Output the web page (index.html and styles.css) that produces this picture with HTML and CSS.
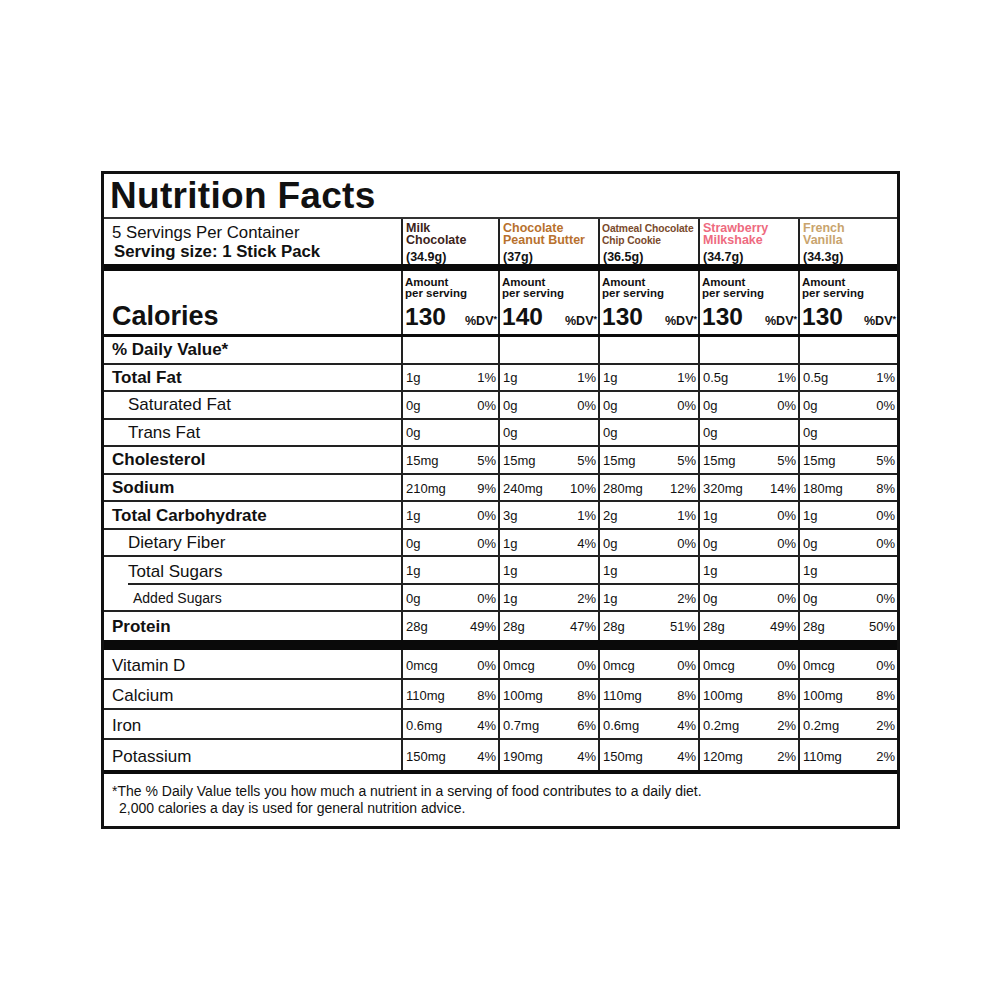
FILE: index.html
```html
<!DOCTYPE html>
<html lang="en">
<head>
<meta charset="utf-8">
<title>Nutrition Facts</title>
<link rel="stylesheet" href="styles.css">
</head>
<body>
<div class="label">
  <div class="title">Nutrition Facts</div>

  <div class="grid head">
    <div class="serv">
      <div>5 Servings Per Container</div>
      <div class="size">Serving size: 1 Stick Pack</div>
    </div>
    <div class="prod"><div class="pname c-milk">Milk<br>Chocolate</div><div class="wt">(34.9g)</div></div>
    <div class="prod"><div class="pname c-pb">Chocolate<br>Peanut Butter</div><div class="wt">(37g)</div></div>
    <div class="prod"><div class="pname small c-oat">Oatmeal Chocolate<br>Chip Cookie</div><div class="wt">(36.5g)</div></div>
    <div class="prod"><div class="pname c-straw">Strawberry<br>Milkshake</div><div class="wt">(34.7g)</div></div>
    <div class="prod"><div class="pname c-van">French<br>Vanilla</div><div class="wt">(34.3g)</div></div>
  </div>
  <div class="bar bar7"></div>

  <div class="grid cal">
    <div class="callab">Calories</div>
    <div class="calv"><div class="amt">Amount<br>per serving</div><div class="kc"><span class="num">130</span><span class="dv">%DV<span class="ast">*</span></span></div></div>
    <div class="calv"><div class="amt">Amount<br>per serving</div><div class="kc"><span class="num">140</span><span class="dv">%DV<span class="ast">*</span></span></div></div>
    <div class="calv"><div class="amt">Amount<br>per serving</div><div class="kc"><span class="num">130</span><span class="dv">%DV<span class="ast">*</span></span></div></div>
    <div class="calv"><div class="amt">Amount<br>per serving</div><div class="kc"><span class="num">130</span><span class="dv">%DV<span class="ast">*</span></span></div></div>
    <div class="calv"><div class="amt">Amount<br>per serving</div><div class="kc"><span class="num">130</span><span class="dv">%DV<span class="ast">*</span></span></div></div>
  </div>
  <div class="bar bar3"></div>

  <div class="grid row">
    <div class="lab b">% Daily Value*</div>
    <div class="v"></div><div class="v"></div><div class="v"></div><div class="v"></div><div class="v"></div>
  </div>
  <div class="grid row">
    <div class="lab b">Total Fat</div>
    <div class="v"><span>1g</span><span>1%</span></div>
    <div class="v"><span>1g</span><span>1%</span></div>
    <div class="v"><span>1g</span><span>1%</span></div>
    <div class="v"><span>0.5g</span><span>1%</span></div>
    <div class="v"><span>0.5g</span><span>1%</span></div>
  </div>
  <div class="grid row">
    <div class="lab ind">Saturated Fat</div>
    <div class="v"><span>0g</span><span>0%</span></div>
    <div class="v"><span>0g</span><span>0%</span></div>
    <div class="v"><span>0g</span><span>0%</span></div>
    <div class="v"><span>0g</span><span>0%</span></div>
    <div class="v"><span>0g</span><span>0%</span></div>
  </div>
  <div class="grid row">
    <div class="lab ind">Trans Fat</div>
    <div class="v"><span>0g</span></div>
    <div class="v"><span>0g</span></div>
    <div class="v"><span>0g</span></div>
    <div class="v"><span>0g</span></div>
    <div class="v"><span>0g</span></div>
  </div>
  <div class="grid row">
    <div class="lab b">Cholesterol</div>
    <div class="v"><span>15mg</span><span>5%</span></div>
    <div class="v"><span>15mg</span><span>5%</span></div>
    <div class="v"><span>15mg</span><span>5%</span></div>
    <div class="v"><span>15mg</span><span>5%</span></div>
    <div class="v"><span>15mg</span><span>5%</span></div>
  </div>
  <div class="grid row">
    <div class="lab b">Sodium</div>
    <div class="v"><span>210mg</span><span>9%</span></div>
    <div class="v"><span>240mg</span><span>10%</span></div>
    <div class="v"><span>280mg</span><span>12%</span></div>
    <div class="v"><span>320mg</span><span>14%</span></div>
    <div class="v"><span>180mg</span><span>8%</span></div>
  </div>
  <div class="grid row">
    <div class="lab b">Total Carbohydrate</div>
    <div class="v"><span>1g</span><span>0%</span></div>
    <div class="v"><span>3g</span><span>1%</span></div>
    <div class="v"><span>2g</span><span>1%</span></div>
    <div class="v"><span>1g</span><span>0%</span></div>
    <div class="v"><span>1g</span><span>0%</span></div>
  </div>
  <div class="grid row">
    <div class="lab ind">Dietary Fiber</div>
    <div class="v"><span>0g</span><span>0%</span></div>
    <div class="v"><span>1g</span><span>4%</span></div>
    <div class="v"><span>0g</span><span>0%</span></div>
    <div class="v"><span>0g</span><span>0%</span></div>
    <div class="v"><span>0g</span><span>0%</span></div>
  </div>
  <div class="grid row">
    <div class="lab ind sugline">Total Sugars</div>
    <div class="v"><span>1g</span></div>
    <div class="v"><span>1g</span></div>
    <div class="v"><span>1g</span></div>
    <div class="v"><span>1g</span></div>
    <div class="v"><span>1g</span></div>
  </div>
  <div class="grid row">
    <div class="lab ind2">Added Sugars</div>
    <div class="v"><span>0g</span><span>0%</span></div>
    <div class="v"><span>1g</span><span>2%</span></div>
    <div class="v"><span>1g</span><span>2%</span></div>
    <div class="v"><span>0g</span><span>0%</span></div>
    <div class="v"><span>0g</span><span>0%</span></div>
  </div>
  <div class="grid row last">
    <div class="lab b">Protein</div>
    <div class="v"><span>28g</span><span>49%</span></div>
    <div class="v"><span>28g</span><span>47%</span></div>
    <div class="v"><span>28g</span><span>51%</span></div>
    <div class="v"><span>28g</span><span>49%</span></div>
    <div class="v"><span>28g</span><span>50%</span></div>
  </div>
  <div class="bar bar10"></div>

  <div class="grid row vit">
    <div class="lab">Vitamin D</div>
    <div class="v"><span>0mcg</span><span>0%</span></div>
    <div class="v"><span>0mcg</span><span>0%</span></div>
    <div class="v"><span>0mcg</span><span>0%</span></div>
    <div class="v"><span>0mcg</span><span>0%</span></div>
    <div class="v"><span>0mcg</span><span>0%</span></div>
  </div>
  <div class="grid row vit">
    <div class="lab">Calcium</div>
    <div class="v"><span>110mg</span><span>8%</span></div>
    <div class="v"><span>100mg</span><span>8%</span></div>
    <div class="v"><span>110mg</span><span>8%</span></div>
    <div class="v"><span>100mg</span><span>8%</span></div>
    <div class="v"><span>100mg</span><span>8%</span></div>
  </div>
  <div class="grid row vit">
    <div class="lab">Iron</div>
    <div class="v"><span>0.6mg</span><span>4%</span></div>
    <div class="v"><span>0.7mg</span><span>6%</span></div>
    <div class="v"><span>0.6mg</span><span>4%</span></div>
    <div class="v"><span>0.2mg</span><span>2%</span></div>
    <div class="v"><span>0.2mg</span><span>2%</span></div>
  </div>
  <div class="grid row vit last">
    <div class="lab">Potassium</div>
    <div class="v"><span>150mg</span><span>4%</span></div>
    <div class="v"><span>190mg</span><span>4%</span></div>
    <div class="v"><span>150mg</span><span>4%</span></div>
    <div class="v"><span>120mg</span><span>2%</span></div>
    <div class="v"><span>110mg</span><span>2%</span></div>
  </div>
  <div class="bar bar4"></div>

  <div class="foot">
    <div>*The % Daily Value tells you how much a nutrient in a serving of food contributes to a daily diet.</div>
    <div class="foot2">2,000 calories a day is used for general nutrition advice.</div>
  </div>
</div>
</body>
</html>
```

FILE: styles.css
```css
* { box-sizing: border-box; }

html, body {
  margin: 0;
  padding: 0;
  background: #ffffff;
}

body {
  font-family: "Liberation Sans", Arial, Helvetica, sans-serif;
  color: #111;
}

.label {
  width: 799px;
  margin: 171px 0 0 101px;
  border: 3px solid #111;
  background: #fff;
}

.title {
  height: 45px;
  line-height: 43px;
  font-size: 37px;
  font-weight: bold;
  padding-left: 6px;
  border-bottom: 2px solid #333;
  letter-spacing: 0.3px;
}

.grid {
  display: grid;
  grid-template-columns: 297px 97px 100px 100px 100px 99px;
}

/* header row */
.head {
  height: 45px;
  grid-template-rows: 45px;
  overflow: hidden;
}

.serv {
  display: flex;
  flex-direction: column;
  justify-content: center;
  padding-left: 8px;
  font-size: 16.8px;
  line-height: 19px;
}
.serv .size { font-weight: bold; padding-left: 2px; }

.prod {
  border-left: 2px solid #222;
  display: flex;
  flex-direction: column;
  justify-content: space-between;
  padding: 3px 0 1px 3px;
  font-weight: bold;
  font-size: 12.5px;
  line-height: 12px;
  white-space: nowrap;
  overflow: hidden;
}
.pname.small {
  font-size: 10.3px;
  line-height: 11.5px;
  padding-top: 1px;
  margin-left: -1px;
  letter-spacing: -0.1px;
}
.wt { color: #111; }

.c-milk { color: #3d1f1b; }
.c-pb { color: #b8712d; }
.c-oat { color: #7a4a2c; }
.c-straw { color: #ee6b80; }
.c-van { color: #c9a46d; }

/* bars */
.bar { background: #0a0a0a; }
.bar7 { height: 7px; }
.bar3 { height: 3px; }
.bar10 { height: 10px; }
.bar4 { height: 4px; }

/* calories */
.cal { height: 63px; grid-template-rows: 63px; }
.callab {
  display: flex;
  align-items: flex-end;
  padding: 0 0 4px 8px;
  font-size: 27px;
  line-height: 27px;
  font-weight: bold;
}
.calv {
  border-left: 2px solid #222;
  display: flex;
  flex-direction: column;
  justify-content: space-between;
  padding: 6px 1px 5px 2px;
  font-weight: bold;
}
.amt { font-size: 11.5px; line-height: 10.5px; }
.kc {
  display: flex;
  justify-content: space-between;
  align-items: baseline;
}
.num { font-size: 24.5px; line-height: 24px; }
.dv { font-size: 12.5px; }
.ast { font-size: 9px; vertical-align: 3px; }

/* nutrient rows */
.row { height: 27.55px; }
.row > div { border-bottom: 2px solid #222; }
.row.last > div { border-bottom: 0; }
.row.vit { height: 30px; }

.lab {
  display: flex;
  align-items: center;
  padding-left: 8px;
  font-size: 17px;
  padding-top: 1px;
}
.lab.b { font-weight: bold; }
.lab.ind { padding-left: 24px; }
.lab.ind2 { padding-left: 29px; font-size: 14px; }
.vit .lab { padding-top: 3px; }

.row > .lab.sugline {
  border-bottom: 0;
  background: linear-gradient(#222, #222) no-repeat right bottom / calc(100% - 24px) 2px;
}

.v {
  border-left: 2px solid #222;
  display: flex;
  justify-content: space-between;
  align-items: center;
  padding: 1px 2px 0 3px;
  font-size: 13px;
}
.vit .v { padding-top: 2px; }

/* footnote */
.foot {
  height: 52px;
  padding: 9px 0 0 8px;
  font-size: 14px;
  line-height: 17px;
}
.foot2 { padding-left: 7px; }
```
